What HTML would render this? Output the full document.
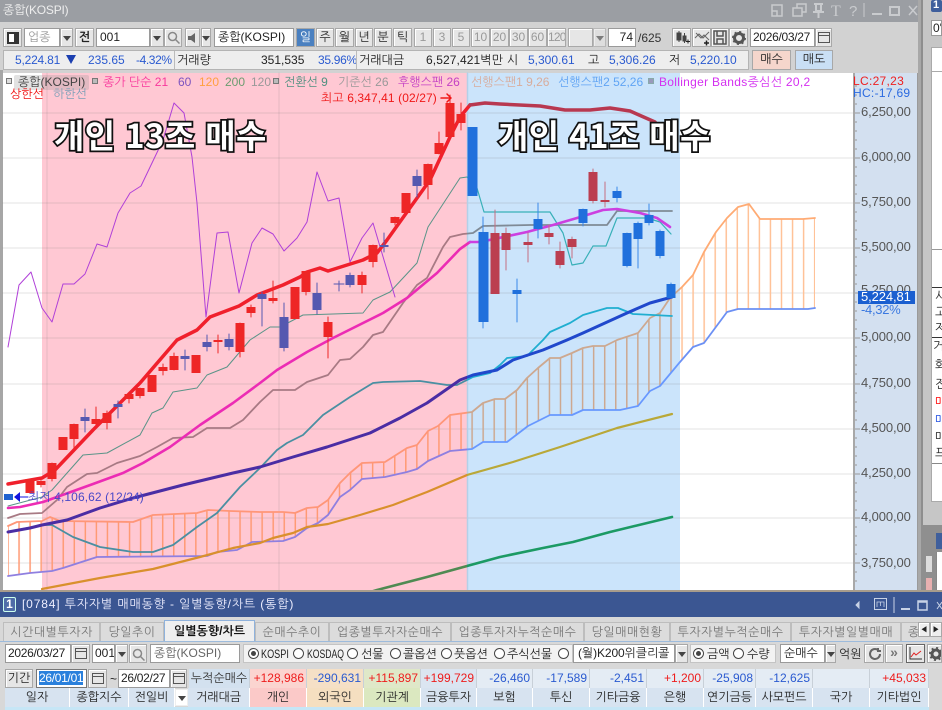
<!DOCTYPE html>
<html lang="ko"><head><meta charset="utf-8"><title>종합(KOSPI)</title>
<style>
html,body{margin:0;padding:0}
body{width:942px;height:710px;overflow:hidden;position:relative;background:#d2d2d2;font-family:"Liberation Sans","NanumGothic","Noto Sans CJK KR",sans-serif;font-size:12px;color:#222}
.a{position:absolute;box-sizing:border-box}
.t{position:absolute;white-space:nowrap;line-height:14px;height:14px}
.b{position:absolute;box-sizing:border-box;background:#e6e6e6;border:1px solid #a8a8a8;text-align:center;line-height:17px;white-space:nowrap;overflow:hidden;box-shadow:inset 1px 1px 0 #fff}
.w{position:absolute;box-sizing:border-box;background:#fff;border:1px solid #9a9a9a;line-height:17px;padding-left:3px;white-space:nowrap;overflow:hidden}
.g{color:#999}
.dd:after{content:"";position:absolute;left:50%;top:50%;margin:-2px 0 0 -4px;border:4px solid transparent;border-top:5px solid #444;border-bottom:0}
.r{position:absolute;width:11px;height:11px;border:1px solid #444;border-radius:50%;background:#fff;box-sizing:border-box}
.r.on:after{content:"";position:absolute;left:2px;top:2px;width:5px;height:5px;border-radius:50%;background:#444}
.tab{position:absolute;top:622px;height:19px;box-sizing:border-box;border:1px solid #bdbdbd;border-bottom:0;background:#dcdcdc;color:#777;text-align:center;line-height:18px;white-space:nowrap;overflow:hidden;font-size:12px;letter-spacing:.5px}
.h{position:absolute;top:688px;height:19px;box-sizing:border-box;background:#d7e3f0;border-right:1px solid #fff;text-align:center;line-height:18px;color:#222;white-space:nowrap}
.c{position:absolute;top:669px;height:19px;box-sizing:border-box;background:#e4ecf4;border-right:1px solid #c8d0d8;text-align:right;padding-right:2px;line-height:19px;white-space:nowrap}
.red{color:#ee1c1c}.blu{color:#2a5ad0}
.big{position:absolute;font-family:"Noto Sans CJK KR","NanumGothic","Liberation Sans",sans-serif;font-weight:700;font-size:33px;line-height:36px;color:#fff;-webkit-text-stroke:3.500px #111;paint-order:stroke fill;white-space:pre;letter-spacing:.4px}
.ax{position:absolute;left:861px;color:#555;line-height:14px;font-size:13px;letter-spacing:-.1px}
</style></head><body>

<!-- title bar -->
<div class="a" style="left:0;top:0;width:921px;height:22px;background:#9b9ea3"></div>
<div class="t" style="left:3px;top:3px;color:#eee;font-size:12px;letter-spacing:-.2px">종합(KOSPI)</div>
<svg class="a" style="left:760px;top:0" width="160" height="22" fill="none" stroke="#c9cbce" stroke-width="1.5">
<path d="M12 5h10v11H12zM12 11h5v5"/><path d="M33 8h9v8H33zM37 8V4h9v8h-4"/>
<path d="M54 4h9M56 4v7h5V4M53 12h11M58.500 12v6" stroke-width="2"/>
<text x="71" y="16" font-family="Liberation Serif,serif" font-size="16" fill="#c9cbce" stroke="none">T</text>
<text x="89" y="16" font-family="Liberation Sans,sans-serif" font-size="15" fill="#c9cbce" stroke="none">?</text>
<path d="M104 3v14" stroke-width="1"/><path d="M112 14h10" stroke-width="2"/><path d="M130 7h9v8h-9z" stroke-width="2"/><path d="M149 6l8 9M157 6l-8 9"/></svg>

<!-- toolbar -->
<div class="b" style="left:3px;top:28px;width:19px;height:19px;line-height:16px"><span class="a" style="left:3px;top:3px;width:12px;height:12px;border:2px solid #333;border-right-width:5px;background:#fff"></span></div>
<div class="w g" style="left:24px;top:28px;width:36px;height:19px">업종</div>
<div class="b dd" style="left:60px;top:28px;width:13px;height:19px"></div>
<div class="b" style="left:75px;top:28px;width:19px;height:19px;font-weight:700">전</div>
<div class="w" style="left:96px;top:28px;width:54px;height:19px">001</div>
<div class="b dd" style="left:150px;top:28px;width:14px;height:19px"></div>
<div class="b" style="left:164px;top:28px;width:18px;height:19px"><svg class="a" style="left:2px;top:2px" width="13" height="13" fill="none" stroke="#888" stroke-width="1.500"><circle cx="5.500" cy="5.500" r="4"/><path d="M8.500 8.500l4 4"/></svg></div>
<div class="b" style="left:185px;top:28px;width:15px;height:19px"><svg class="a" style="left:1px;top:3px" width="12" height="12"><path d="M1 4h3l4-3v10L4 8H1z" fill="#666"/></svg></div>
<div class="b dd" style="left:201px;top:28px;width:10px;height:19px"></div>
<div class="w" style="left:214px;top:28px;width:80px;height:19px">종합(KOSPI)</div>
<div class="b" style="left:296px;top:28px;width:19px;height:19px;background:#4a80c0;color:#fff;box-shadow:none">일</div>
<div class="b" style="left:316px;top:28px;width:18px;height:19px">주</div>
<div class="b" style="left:335px;top:28px;width:19px;height:19px">월</div>
<div class="b" style="left:355px;top:28px;width:18px;height:19px">년</div>
<div class="b" style="left:374px;top:28px;width:18px;height:19px">분</div>
<div class="b" style="left:393px;top:28px;width:19px;height:19px">틱</div>
<div class="b g" style="left:414px;top:28px;width:18px;height:19px">1</div>
<div class="b g" style="left:433px;top:28px;width:18px;height:19px">3</div>
<div class="b g" style="left:452px;top:28px;width:18px;height:19px">5</div>
<div class="b g" style="left:471px;top:28px;width:19px;height:19px">10</div>
<div class="b g" style="left:490px;top:28px;width:19px;height:19px">20</div>
<div class="b g" style="left:509px;top:28px;width:19px;height:19px">30</div>
<div class="b g" style="left:528px;top:28px;width:19px;height:19px">60</div>
<div class="b g" style="left:547px;top:28px;width:19px;height:19px;letter-spacing:-.8px">120</div>
<div class="b" style="left:568px;top:28px;width:25px;height:19px"></div>
<div class="b dd" style="left:593px;top:28px;width:13px;height:19px;opacity:.6"></div>
<div class="w" style="left:608px;top:28px;width:28px;height:19px;text-align:right;padding-right:2px">74</div>
<div class="t" style="left:638px;top:31px;color:#333">/625</div>
<div class="b" style="left:672px;top:28px;width:19px;height:19px"><svg class="a" style="left:1px;top:1px" width="16" height="16" fill="#444"><path d="M3 3h4v7H3zM9 6h3v5H9zM5 1v11M10.500 3v10" stroke="#444"/><path d="M12 11h1.500v-1.500h1V11H16v1h-1.500v1.500h-1V12H12z" fill="#222"/></svg></div>
<div class="b" style="left:692px;top:28px;width:19px;height:19px"><svg class="a" style="left:1px;top:1px" width="16" height="16" fill="none" stroke="#666"><path d="M1 8l4-4 4 4 6-6M2 3l5 5 3-3 5 5"/><path d="M10 13h5M12.500 10.500v5" stroke="#222" stroke-width="1.500"/></svg></div>
<div class="b" style="left:711px;top:28px;width:18px;height:19px"><svg class="a" style="left:1px;top:1px" width="15" height="15" fill="none" stroke="#555" stroke-width="1.500"><path d="M1 1h12v13H1zM4 1v5h6V1M4 14V9h6v5"/></svg></div>
<div class="b" style="left:729px;top:28px;width:19px;height:19px"><svg class="a" style="left:2px;top:2px" width="14" height="14"><circle cx="7" cy="7" r="4.500" fill="none" stroke="#555" stroke-width="3"/><circle cx="7" cy="7" r="6" fill="none" stroke="#555" stroke-width="2" stroke-dasharray="2 2.700"/></svg></div>
<div class="w" style="left:750px;top:28px;width:65px;height:19px;padding-left:2px;letter-spacing:-.3px">2026/03/27</div>
<div class="b" style="left:815px;top:28px;width:17px;height:19px"><svg class="a" style="left:2px;top:3px" width="12" height="11" fill="none" stroke="#555"><path d="M.500 .500h11v10H.500zM.500 3.500h11" /></svg></div>

<!-- info row -->
<div class="a" style="left:3px;top:50px;width:746px;height:20px;background:#eeeeee;border:1px solid #b4b4b4"></div>
<div class="t blu" style="left:15px;top:53px;font-size:12px;letter-spacing:-.2px">5,224.81</div><div class="a" style="left:66px;top:55px;width:0;height:0;border:5px solid transparent;border-top:9px solid #1b3fb0;border-left-width:5px;border-bottom:0"></div>
<div class="t blu" style="left:88px;top:53px">235.65</div>
<div class="t blu" style="left:136px;top:53px;letter-spacing:-.4px">-4.32%</div>
<div class="a" style="left:174px;top:51px;width:1px;height:18px;background:#bbb"></div>
<div class="t" style="left:177px;top:53px">거래량</div>
<div class="t" style="left:261px;top:53px">351,535</div>
<div class="t blu" style="left:318px;top:53px;letter-spacing:-.3px">35.96%</div>
<div class="a" style="left:356px;top:51px;width:1px;height:18px;background:#bbb"></div>
<div class="t" style="left:359px;top:53px">거래대금</div>
<div class="t" style="left:426px;top:53px;letter-spacing:.1px">6,527,421벽만</div>
<div class="t" style="left:507px;top:53px">시</div><div class="t blu" style="left:528px;top:53px">5,300.61</div>
<div class="t" style="left:588px;top:53px">고</div><div class="t blu" style="left:609px;top:53px">5,306.26</div>
<div class="t" style="left:669px;top:53px">저</div><div class="t blu" style="left:690px;top:53px">5,220.10</div>
<div class="b" style="left:752px;top:50px;width:39px;height:20px;background:#f5d6cc;box-shadow:none">매수</div>
<div class="b" style="left:795px;top:50px;width:38px;height:20px;background:#c9dff5;box-shadow:none">매도</div>

<!-- chart -->
<div class="a" style="left:0;top:70px;width:3px;height:520px;background:#a6a6a6"></div>
<svg class="a" style="left:0;top:0;filter:blur(.35px)" width="942" height="590" fill="none" stroke-linejoin="round" stroke-linecap="round">
<defs>
<clipPath id="cp"><rect x="0" y="73" width="467" height="517"/></clipPath>
<clipPath id="cb"><rect x="467" y="73" width="213" height="517"/></clipPath>
<clipPath id="cw"><rect x="680" y="73" width="175" height="517"/></clipPath>
<pattern id="vo" patternUnits="userSpaceOnUse" x="18.300" y="0" width="11.050" height="10"><rect width="1.500" height="10" fill="#ff9a74"/></pattern>
<pattern id="vt" patternUnits="userSpaceOnUse" x="18.300" y="0" width="11.050" height="10"><rect width="1.500" height="10" fill="#cda890"/></pattern>
<pattern id="vw" patternUnits="userSpaceOnUse" x="18.300" y="0" width="11.050" height="10"><rect width="1.500" height="10" fill="#ffc298"/></pattern>
<polygon id="cloud" points="8,526 17,522 42,521 50,517 60,521 133,522 153,515 197,513 208,510 230,511 260,512 283,512 295,513 307,508 318,507 328,500 340,483 350,473 362,463 385,462 407,448 417,445 428,431 438,426 450,415 472,412 483,403 495,399 505,399 517,390 527,378 538,368 550,358 560,358 572,353 583,348 593,346 605,346 617,340 638,333 650,318 660,313 670,298 682,287 693,275 704,252 716,232 727,218 738,207 749,204 760,219 803,219 815,218 815,308 808,309 738,309 727,312 704,343 693,347 680,362 660,386 650,391 638,406 620,410 583,410 572,415 550,415 528,426 507,442 483,442 472,449 450,451 428,461 417,469 407,472 385,477 362,479 350,490 340,497 328,515 318,523 307,528 295,537 283,541 260,542 252,542 237,550 217,552 207,556 97,557 63,568 52,571 30,573 8,576"/>
<polyline id="cu" points="8,526 17,522 42,521 50,517 60,521 133,522 153,515 197,513 208,510 230,511 260,512 283,512 295,513 307,508 318,507 328,500 340,483 350,473 362,463 385,462 407,448 417,445 428,431 438,426 450,415 472,412 483,403 495,399 505,399 517,390 527,378 538,368 550,358 560,358 572,353 583,348 593,346 605,346 617,340 638,333 650,318 660,313 670,298 682,287 693,275 704,252 716,232 727,218 738,207 749,204 760,219 803,219 815,218"/>
<polyline id="cl" points="8,576 30,573 52,571 63,568 97,557 207,556 217,552 237,550 252,542 283,541 295,537 307,528 318,523 328,515 340,497 350,490 362,479 385,477 407,472 417,469 428,461 450,451 472,449 483,442 507,442 528,426 550,415 572,415 583,410 620,410 638,406 650,391 660,386 680,362 693,347 704,343 727,312 738,309 808,309 815,308"/>
<polyline id="l200" points="8,532 30,528 42,525 67,520 100,508 133,498 183,485 233,473 260,467 293,457 327,447 370,433 400,418 427,403 460,380 473,375 497,370 513,360 543,350 567,340 583,333 627,313 650,303 672,297"/>
<polyline id="lt" points="8,532 42,525 52,525 73,537 100,547 133,552 153,552 173,545 197,527 217,513 240,487 260,468 277,450 287,443 303,435 323,415 350,397 373,383 383,382 420,381 447,385 457,385 473,377 490,373 500,365 507,358 527,356 543,340 550,332 570,323 583,315 607,308 618,308 633,314 672,316"/>
<polyline id="lo" points="42,589 100,578 153,569 200,557 233,548 260,543 273,538 293,533 307,527 328,524 360,515 393,505 427,492 467,475 513,462 560,447 617,428 672,414"/>
<polyline id="lg" points="360,595 377,590 427,577 467,566 500,557 543,548 573,542 610,532 672,517"/>
<polyline id="lgray" points="8,518 20,514 42,513 57,500 67,487 87,474 97,473 117,463 140,456 157,447 173,438 193,437 207,428 230,428 243,420 260,402 273,390 295,390 307,382 328,375 340,360 350,359 363,347 373,335 383,332 403,303 417,285 427,278 443,247 450,237 463,234 473,233 483,226 530,225 607,225 617,211 672,211"/>
</defs>
<rect x="3" y="73" width="850" height="517" fill="#fff"/>
<rect x="42" y="73" width="425" height="517" fill="#ffc8d3"/>
<rect x="467" y="73" width="213" height="517" fill="#cbe4fb"/>
<g stroke="#777" stroke-opacity=".17" stroke-width="1.300">
<path d="M3 113H853M3 158H853M3 203H853M3 248H853M3 293H853M3 338H853M3 384H853M3 429H853M3 474H853M3 518H853M3 563H853"/>
</g>
<path d="M47 73V590M279 73V590" stroke="#777" stroke-opacity=".2" stroke-width="1"/>
<path d="M467.500 73V590" stroke="#b4d0e8" stroke-width="1.500"/>

<!-- cloud -->
<g clip-path="url(#cp)"><use href="#cloud" fill="url(#vo)"/><use href="#cu" stroke="#ff9678" stroke-width="1.800"/><use href="#cl" stroke="#8f7fe0" stroke-width="1.800"/></g>
<g clip-path="url(#cb)"><use href="#cloud" fill="url(#vt)"/><use href="#cu" stroke="#cda890" stroke-width="1.800"/><use href="#cl" stroke="#6898ff" stroke-width="1.800"/></g>
<g clip-path="url(#cw)"><use href="#cloud" fill="url(#vw)"/><use href="#cu" stroke="#ffab74" stroke-width="1.800"/><use href="#cl" stroke="#6c90f4" stroke-width="1.800"/></g>

<!-- long MAs -->
<g clip-path="url(#cp)"><use href="#lo" stroke="#d9902c" stroke-width="2.200"/><use href="#lg" stroke="#4f8a52" stroke-width="2.600"/></g>
<g clip-path="url(#cb)"><use href="#lo" stroke="#b9a838" stroke-width="2.200"/><use href="#lg" stroke="#1c9a64" stroke-width="2.600"/></g>
<g clip-path="url(#cp)"><use href="#lt" stroke="#4a8fa2" stroke-width="1.800"/></g>
<g clip-path="url(#cb)"><use href="#lt" stroke="#20aed0" stroke-width="1.800"/></g>
<g clip-path="url(#cp)"><use href="#l200" stroke="#4a2da4" stroke-width="3"/></g>
<g clip-path="url(#cb)"><use href="#l200" stroke="#2048cc" stroke-width="3"/></g>
<g clip-path="url(#cp)"><use href="#lgray" stroke="#a87a84" stroke-width="1.800"/></g>
<g clip-path="url(#cb)"><use href="#lgray" stroke="#7f8a96" stroke-width="1.800"/></g>

<!-- 전환선 -->
<polyline stroke="#5a9488" stroke-width="1" points="8,506 42,497 52,490 83,455 107,453 140,435 152,413 163,408 173,392 197,388 207,375 227,367 250,340 270,327 280,327 303,315 333,314 363,313 373,300 390,292 417,263 428,227 460,178 467,177"/>
<polyline stroke="#38b0b8" stroke-width="1.200" points="467,177 477,188 484,212 550,212 563,233 572,265 583,263 593,246 606,246 617,218 647,218 660,222 671,234"/>
<!-- 후행 -->
<polyline stroke="#b040d8" stroke-width="1" points="8,347 19,285 31,272 42,308 52,322 63,284 74,284 85,274 97,244 107,247 118,213 130,193 141,186 163,140 174,103 184,113 192,157 197,203 206,317 217,233 228,232 239,293 252,243 262,228 273,234 284,251 297,238 307,222 317,172 328,201 339,198 350,262 362,238 373,223 395,297"/>
<!-- magenta -->
<polyline stroke="#ec2cb4" stroke-width="2.600" points="8,508 20,507 43,502 93,484 123,473 143,463 170,447 200,425 233,403 260,383 277,370 307,352 333,338 383,313 407,298 437,273 460,249 470,242"/>
<polyline stroke="#cc40e0" stroke-width="2.600" points="470,242 480,242 527,232 553,225 577,218 603,210 617,209 640,213 657,218 670,227"/>
<!-- red -->
<polyline stroke="#f0202c" stroke-width="3.500" points="8,484 42,478 55,470 93,430 140,383 177,340 197,330 210,317 239,306 257,295 283,285 300,277 307,272 320,268 328,271 363,260 377,253 387,240 407,212 430,180 450,137 460,117 470,105"/>
<polyline stroke="#b83850" stroke-width="3.500" points="470,105 485,103 500,104 540,106 565,110 590,110 610,108 630,111 655,122"/>

<!-- candle wicks -->
<path stroke="#ee2626" stroke-width="1" d="M41 478V487M52 463V481M74 424V449M96 407V425M107 411V429M129 394V403M140 388V398M163 364V375M174 353V370M218 335V353M240 323V357M251 305V317M273 281V303M306 271V295M328 317V358M362 272V293M373 245V267M395 217V225M428 164V199M439 132V154M450 95V137M461 103V130"/>
<path stroke="#5558b0" stroke-width="1" d="M85 409V432M118 401V418M185 350V370M207 335V351M229 334V350M262 292V326M284 303V351M317 283V314M339 281V291M334 284H344M350 273V287M384 233V252M417 170V197"/>
<path stroke="#c56e80" stroke-width="1" d="M495 210V233M506 228V270M528 233V262M549 225V244M560 242V268M572 237V258M593 169V203M605 182V207"/>
<path stroke="#3a88e8" stroke-width="1" d="M483 217V328M517 279V322M538 203V238M583 209V226M617 187V202M627 233V267M638 222V268M649 204V225M660 230V258M671 283V298"/>
<!-- candle bodies -->
<path fill="#ee2626" d="M25.500 479h9v14h-9zM36.500 481h9v4h-9zM47.500 463h9v16h-9zM58.500 437h9v13h-9zM69.500 424h9v15h-9zM91.500 419h9v5h-9zM102.500 413h9v10h-9zM124.500 394h9v5h-9zM135.500 388h9v8h-9zM147.500 375h9v17h-9zM158.500 367h9v4h-9zM169.500 356h9v14h-9zM191.500 355h9v18h-9zM213.500 340h9v2h-9zM235.500 323h9v29h-9zM246.500 307h9v6h-9zM268.500 298h9v3h-9zM290.500 287h9v32h-9zM301.500 271h9v21h-9zM323.500 322h9v15h-9zM357.500 275h9v10h-9zM368.500 245h9v17h-9zM390.500 217h9v6h-9zM401.500 193h9v20h-9zM423.500 164h9v21h-9zM434.500 143h9v11h-9zM445.500 103h9v34h-9zM456.500 114h9v9h-9z"/>
<path fill="#5558b0" d="M80.500 417h9v4h-9zM113.500 404h9v3h-9zM180.500 356h9v3h-9zM202.500 342h9v5h-9zM224.500 339h9v8h-9zM257.500 294h9v5h-9zM279.500 317h9v31h-9zM312.500 293h9v17h-9zM345.500 275h9v10h-9zM379.500 245h9v2h-9zM412.500 176h9v10h-9z"/>
<path fill="#bb3e50" d="M490.500 233h9v61h-9zM501.500 233h9v17h-9zM523.500 242h9v3h-9zM544.500 233h9v4h-9zM555.500 251h9v14h-9zM567.500 239h9v8h-9zM588.500 172h9v29h-9zM600.500 200h9v2h-9z"/>
<path fill="#2070dc" d="M467.500 127h10v69h-10zM478.500 232h10v90h-10zM512.500 290h9v4h-9zM533.500 219h9v10h-9zM578.500 209h9v14h-9zM612.500 191h9v7h-9zM622.500 233h9v33h-9zM633.500 223h9v16h-9zM644.500 215h9v8h-9zM655.500 231h9v25h-9zM666.500 284h9v14h-9z"/>
<!-- arrows -->
<path fill="#1f62d0" d="M4 494h9v6H4z"/><path fill="#1212e0" d="M14 497l6-5v10z"/><path stroke="#1212e0" d="M20 497h8"/>
<path stroke="#f01818" stroke-width="1.500" d="M441 98h10M447 94l4 4-4 4"/>
</svg>

<!-- axis -->
<div class="a" style="left:853px;top:73px;width:65px;height:517px;background:#d3e0f0;border-left:2px solid #a8a8a8;border-right:1px solid #9a9a9a"></div>
<svg class="a" style="left:855px;top:73px" width="6" height="517" stroke="#999"><path d="M0 13h2M0 22h2M0 31h2M0 40h5M0 49h2M0 58h2M0 67h2M0 76h2M0 85h5M0 94h2M0 103h2M0 112h2M0 121h2M0 130h5M0 139h2M0 148h2M0 157h2M0 166h2M0 175h5M0 184h2M0 193h2M0 202h2M0 211h2M0 220h5M0 229h2M0 238h2M0 247h2M0 256h2M0 265h5M0 274h2M0 283h2M0 292h2M0 301h2M0 311h5M0 320h2M0 329h2M0 338h2M0 347h2M0 356h5M0 365h2M0 374h2M0 383h2M0 392h2M0 401h5M0 410h2M0 419h2M0 428h2M0 437h2M0 445h5M0 454h2M0 463h2M0 472h2M0 481h2M0 490h5M0 499h2M0 508h2"/></svg>
<div class="ax" style="top:105px">6,250,00</div>
<div class="ax" style="top:150px">6,000,00</div>
<div class="ax" style="top:195px">5,750,00</div>
<div class="ax" style="top:240px">5,500,00</div>
<div class="ax" style="top:283px">5,250,00</div>
<div class="ax" style="top:330px">5,000,00</div>
<div class="ax" style="top:376px">4,750,00</div>
<div class="ax" style="top:421px">4,500,00</div>
<div class="ax" style="top:466px">4,250,00</div>
<div class="ax" style="top:510px">4,000,00</div>
<div class="ax" style="top:556px">3,750,00</div>
<div class="a" style="left:858px;top:291px;width:57px;height:13px;background:#1a5fd0"></div>
<div class="t" style="left:861px;top:290px;color:#fff;font-size:13px;letter-spacing:-.1px">5,224,81</div>
<div class="t" style="left:861px;top:303px;color:#3a78e0;font-size:13px;letter-spacing:-.3px">-4,32%</div>
<div class="t" style="left:853px;top:74px;color:#ee2020;font-size:12px;letter-spacing:.3px">LC:27,23</div>
<div class="t" style="left:853px;top:86px;color:#2a6ae0;font-size:12px;letter-spacing:.3px">HC:-17,69</div>

<!-- legend -->
<div class="a" style="left:14px;top:75px;width:75px;height:15px;background:rgba(150,150,150,.28);border-radius:2px"></div>
<div class="a" style="left:6px;top:78px;width:6px;height:6px;border:1px solid #777;background:#ddd"></div>
<div class="t" style="left:18px;top:75px;color:#444">종합(KOSPI)</div>
<div class="a" style="left:92px;top:78px;width:6px;height:6px;border:1px solid #777;background:#bbb"></div>
<div class="t" style="left:103px;top:75px;color:#f8389c">종가 단순 21</div>
<div class="t" style="left:178px;top:75px;color:#7c54c0">60</div>
<div class="t" style="left:199px;top:75px;color:#ffa040">120</div>
<div class="t" style="left:225px;top:75px;color:#6c9c70">200</div>
<div class="t" style="left:251px;top:75px;color:#999">120</div>
<div class="a" style="left:273px;top:78px;width:6px;height:6px;border:1px solid #777;background:#bbb"></div>
<div class="t" style="left:284px;top:75px;color:#4f9080">전환선 9</div>
<div class="t" style="left:338px;top:75px;color:#999">기준선 26</div>
<div class="t" style="left:398px;top:75px;color:#c440c4">후행스팬 26</div>
<div class="t" style="left:471px;top:75px;color:#d8ac9c">선행스팬1 9,26</div>
<div class="t" style="left:558px;top:75px;color:#60a4f4">선행스팬2 52,26</div>
<div class="a" style="left:648px;top:78px;width:6px;height:6px;border:1px solid #8aa;background:#99b"></div>
<div class="t" style="left:659px;top:75px;color:#d430f0;letter-spacing:.3px">Bollinger Bands중심선 20,2</div>
<div class="t" style="left:10px;top:87px;color:#f01010">상한선</div>
<div class="t" style="left:53px;top:87px;color:#7fa0b8">하한선</div>
<div class="t" style="left:321px;top:91px;color:#f01818;letter-spacing:.1px">최고 6,347,41 (02/27)</div>
<div class="t" style="left:28px;top:490px;color:#4a48c8;letter-spacing:.1px">최저 4,106,62 (12/24)</div>

<div class="big" style="left:54px;top:116px">개인 13조 매수</div>
<div class="big" style="left:498px;top:116px">개인 41조 매수</div>

<!-- right panel -->
<div class="a" style="left:918px;top:0;width:4px;height:590px;background:#a8a8a8"></div>
<div class="a" style="left:921px;top:0;width:21px;height:590px;background:#c6c6c6;border-left:2px solid #8e8e8e"></div>
<div class="a" style="left:931px;top:0;width:11px;height:12px;background:#3f5f9c;border-radius:2px;color:#fff;font-weight:700;line-height:11px;padding-left:2px;font-size:11px">1</div>
<div class="w" style="left:931px;top:20px;width:11px;height:16px;line-height:15px;padding-left:1px">0'</div>
<div class="a" style="left:931px;top:47px;width:11px;height:25px;background:#fff;border:1px solid #aaa;border-right:0"></div>
<div class="a" style="left:931px;top:72px;width:11px;height:430px;background:#fff;border:1px solid #aaa;border-right:0;border-top:0"></div>
<div class="a" style="left:932px;top:249px;width:10px;height:1px;background:#999"></div>
<div class="a" style="left:932px;top:287px;width:10px;height:1px;background:#333"></div>
<div class="a" style="left:932px;top:337px;width:10px;height:1px;background:#333"></div>
<div class="a" style="left:932px;top:463px;width:10px;height:1px;background:#888"></div>
<div class="t" style="left:935px;top:289px">시</div><div class="t" style="left:935px;top:305px">고</div><div class="t" style="left:935px;top:321px">저</div>
<div class="t" style="left:933px;top:339px">거</div><div class="t" style="left:935px;top:358px">화</div><div class="t" style="left:935px;top:377px">전</div>
<div class="t" style="left:935px;top:395px;color:#f00">매</div><div class="t" style="left:935px;top:413px;color:#1a4ae0">매</div><div class="t" style="left:935px;top:430px">매</div><div class="t" style="left:935px;top:446px">프</div>
<div class="a" style="left:921px;top:525px;width:21px;height:65px;background:#8f8f8f"></div>
<div class="a" style="left:936px;top:533px;width:6px;height:16px;background:#3f5f9c"></div>
<div class="a" style="left:936px;top:552px;width:6px;height:38px;background:#fff;border-left:1px solid #888"></div>
<div class="a" style="left:926px;top:556px;width:6px;height:16px;background:#ddd"></div>
<div class="a" style="left:926px;top:578px;width:6px;height:12px;background:#e8b0b0"></div>

<!-- bottom panel -->
<div class="a" style="left:0;top:590px;width:942px;height:2px;background:#a89c8c"></div>
<div class="a" style="left:0;top:592px;width:942px;height:25px;background:#3b5692"></div>
<div class="a" style="left:3px;top:597px;width:13px;height:15px;border:1px solid #cfe;background:#4f6da8;color:#fff;text-align:center;line-height:13px;font-weight:700;font-size:12px;border-radius:2px">1</div>
<div class="t" style="left:22px;top:597px;color:#eef;letter-spacing:.85px">[0784] 투자자별 매매동향 - 일별동향/차트 (통합)</div>
<svg class="a" style="left:855px;top:595px" width="87" height="20" fill="none" stroke="#c8d2e6"><path d="M4 7v6l-3-3z" fill="#c8d2e6"/><path d="M19.500 3.500h12v11h-12z"/><path d="M22 12V7h7v5M25.500 7v4" stroke-width=".8"/><path d="M39 2v16"/><path d="M46 14h9" stroke-width="2"/><path d="M63 6h9v9h-9zM63 7h9" stroke-width="1.500"/><path d="M82 7l5 7M87 7l-5 7"/></svg>

<div class="a" style="left:0;top:617px;width:942px;height:93px;background:#d8d8d8"></div>
<div class="tab" style="left:3px;width:97px">시간대별투자자</div>
<div class="tab" style="left:100px;width:64px">당일추이</div>
<div class="tab" style="left:164px;width:91px;top:620px;height:22px;background:#efefef;color:#111;font-weight:700;border:1px solid #8fb2dc;border-bottom:0;line-height:20px;letter-spacing:0">일별동향/차트</div>
<div class="tab" style="left:255px;width:74px">순매수추이</div>
<div class="tab" style="left:329px;width:122px">업종별투자자순매수</div>
<div class="tab" style="left:451px;width:133px">업종투자자누적순매수</div>
<div class="tab" style="left:584px;width:86px">당일매매현황</div>
<div class="tab" style="left:670px;width:121px">투자자별누적순매수</div>
<div class="tab" style="left:791px;width:110px">투자자별일별매매</div>
<div class="tab" style="left:901px;width:41px;text-align:left;padding-left:6px">종</div>
<div class="b" style="left:918px;top:622px;width:12px;height:15px;line-height:13px;font-size:8px;background:#eee">◀</div>
<div class="b" style="left:930px;top:622px;width:12px;height:15px;line-height:13px;font-size:8px;background:#eee">▶</div>
<div class="a" style="left:0;top:641px;width:942px;height:1px;background:#9dbbdc"></div>

<div class="w" style="left:5px;top:644px;width:66px;height:19px;padding-left:2px;letter-spacing:-.3px">2026/03/27</div>
<div class="b" style="left:71px;top:644px;width:19px;height:19px"><svg class="a" style="left:3px;top:3px" width="12" height="11" fill="none" stroke="#555"><path d="M.500 .500h11v10H.500zM.500 3.500h11"/></svg></div>
<div class="w" style="left:92px;top:644px;width:23px;height:19px;padding-left:2px">001</div>
<div class="b dd" style="left:115px;top:644px;width:13px;height:19px"></div>
<div class="b" style="left:129px;top:644px;width:18px;height:19px"><svg class="a" style="left:2px;top:3px" width="13" height="13" fill="none" stroke="#888" stroke-width="1.500"><circle cx="5.500" cy="5.500" r="4"/><path d="M8.500 8.500l4 4"/></svg></div>
<div class="w" style="left:150px;top:644px;width:90px;height:19px;color:#666">종합(KOSPI)</div>
<div class="a" style="left:243px;top:644px;width:330px;height:19px;background:#f2f2f2;border:1px solid #c4c4c4"></div>
<div class="r on" style="left:248px;top:648px"></div><div class="t" style="left:261px;top:647px;transform:scaleX(.76);transform-origin:0 50%">KOSPI</div>
<div class="r" style="left:293px;top:648px"></div><div class="t" style="left:307px;top:647px;transform:scaleX(.72);transform-origin:0 50%">KOSDAQ</div>
<div class="r" style="left:347px;top:648px"></div><div class="t" style="left:361px;top:647px">선물</div>
<div class="r" style="left:390px;top:648px"></div><div class="t" style="left:403px;top:647px">콜옵션</div>
<div class="r" style="left:441px;top:648px"></div><div class="t" style="left:454px;top:647px">풋옵션</div>
<div class="r" style="left:494px;top:648px"></div><div class="t" style="left:507px;top:647px">주식선물</div>
<div class="r" style="left:558px;top:648px"></div>
<div class="w" style="left:573px;top:644px;width:102px;height:19px;letter-spacing:-.1px;padding-left:4px">(월)K200위클리콜</div>
<div class="b dd" style="left:675px;top:644px;width:13px;height:19px"></div>
<div class="a" style="left:690px;top:644px;width:86px;height:19px;background:#f2f2f2;border:1px solid #c4c4c4"></div>
<div class="r on" style="left:693px;top:648px"></div><div class="t" style="left:707px;top:647px">금액</div>
<div class="r" style="left:733px;top:648px"></div><div class="t" style="left:747px;top:647px">수량</div>
<div class="w" style="left:780px;top:644px;width:45px;height:19px">순매수</div>
<div class="b dd" style="left:825px;top:644px;width:11px;height:19px"></div>
<div class="t" style="left:839px;top:647px">억원</div>
<div class="b" style="left:864px;top:644px;width:20px;height:19px"><svg class="a" style="left:3px;top:2px" width="14" height="14" fill="none" stroke="#666" stroke-width="2"><path d="M12 7a5 5 0 1 1-2-4M10 1v3h3"/></svg></div>
<div class="b" style="left:885px;top:644px;width:18px;height:19px;color:#777;font-weight:700;font-size:14px;line-height:15px">»</div>
<div class="b" style="left:906px;top:644px;width:19px;height:19px;border-color:#666"><svg class="a" style="left:1px;top:1px" width="15" height="15" fill="none"><path d="M2 1v12h12" stroke="#333"/><path d="M3 11l3-4 2 2 5-4" stroke="#e02020"/></svg></div>
<div class="b" style="left:927px;top:644px;width:15px;height:19px"><svg class="a" style="left:1px;top:2px" width="14" height="14"><circle cx="7" cy="7" r="4" fill="none" stroke="#555" stroke-width="3"/><circle cx="7" cy="7" r="6" fill="none" stroke="#555" stroke-width="2" stroke-dasharray="2 2.700"/></svg></div>

<div class="b" style="left:5px;top:669px;width:28px;height:19px">기간</div>
<div class="w" style="left:36px;top:669px;width:51px;height:19px;padding-left:2px;letter-spacing:-.3px;border-color:#777"><span style="background:#2a80dc;color:#fff">26/01/01</span></div>
<div class="b" style="left:88px;top:669px;width:19px;height:19px"><svg class="a" style="left:3px;top:3px" width="12" height="11" fill="none" stroke="#555"><path d="M.500 .500h11v10H.500zM.500 3.500h11"/></svg></div>
<div class="t" style="left:110px;top:672px">~</div>
<div class="w" style="left:118px;top:669px;width:52px;height:19px;padding-left:2px;letter-spacing:-.3px">26/02/27</div>
<div class="b" style="left:170px;top:669px;width:17px;height:19px"><svg class="a" style="left:2px;top:3px" width="12" height="11" fill="none" stroke="#555"><path d="M.500 .500h11v10H.500zM.500 3.500h11"/></svg></div>
<div class="c" style="left:189px;width:61px;background:#d3e1ef;text-align:center;padding:0;color:#333">누적순매수</div>
<div class="c red" style="left:250px;width:57px;background:#fbd4d0">+128,986</div>
<div class="c blu" style="left:307px;width:57px;background:#f5e0c6">-290,631</div>
<div class="c red" style="left:364px;width:57px;background:#dfe8c8">+115,897</div>
<div class="c red" style="left:421px;width:56px;background:#dbe5f1">+199,729</div>
<div class="c blu" style="left:477px;width:56px">-26,460</div>
<div class="c blu" style="left:533px;width:57px">-17,589</div>
<div class="c blu" style="left:590px;width:57px">-2,451</div>
<div class="c red" style="left:647px;width:57px">+1,200</div>
<div class="c blu" style="left:704px;width:52px">-25,908</div>
<div class="c blu" style="left:756px;width:57px">-12,625</div>
<div class="c" style="left:813px;width:57px"></div>
<div class="c red" style="left:870px;width:59px">+45,033</div>

<div class="h" style="left:5px;width:65px">일자</div>
<div class="h" style="left:70px;width:59px">종합지수</div>
<div class="h" style="left:129px;width:46px">전일비</div>
<div class="b dd" style="left:175px;top:689px;width:13px;height:17px;background:#fff;box-shadow:none;border-color:#eee"></div>
<div class="h" style="left:188px;width:62px">거래대금</div>
<div class="h" style="left:250px;width:57px;background:#fbc9c8">개인</div>
<div class="h" style="left:307px;width:57px;background:#f5dfc0">외국인</div>
<div class="h" style="left:364px;width:57px;background:#dbe8c0">기관계</div>
<div class="h" style="left:421px;width:56px">금융투자</div>
<div class="h" style="left:477px;width:56px">보험</div>
<div class="h" style="left:533px;width:57px">투신</div>
<div class="h" style="left:590px;width:57px">기타금융</div>
<div class="h" style="left:647px;width:57px">은행</div>
<div class="h" style="left:704px;width:52px">연기금등</div>
<div class="h" style="left:756px;width:57px">사모펀드</div>
<div class="h" style="left:813px;width:57px">국가</div>
<div class="h" style="left:870px;width:59px">기타법인</div>
<div class="a" style="left:5px;top:707px;width:924px;height:3px;background:#c6e6f6"></div>
</body></html>
